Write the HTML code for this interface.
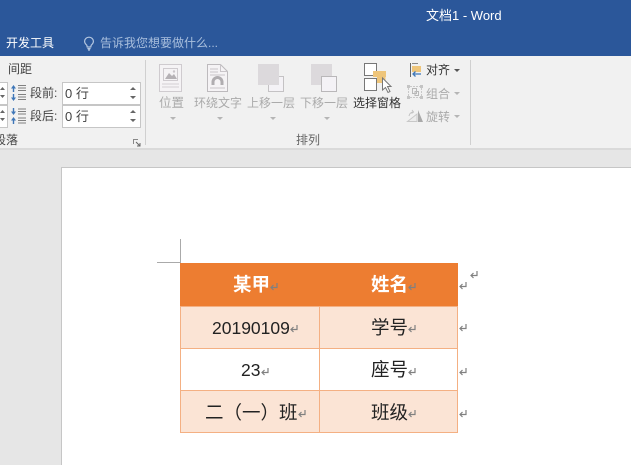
<!DOCTYPE html>
<html><head><meta charset="utf-8">
<style>
*{box-sizing:border-box;margin:0;padding:0}
html,body{width:631px;height:465px;overflow:hidden;background:#e6e6e6}
body{position:relative;font-family:"Liberation Sans","Noto Sans CJK SC",sans-serif}
.a{position:absolute;white-space:nowrap}
.t{font-size:12px;line-height:14px;color:#444}
.g{color:#aaa}
.c{font-size:18.5px;line-height:20px;color:#222}
svg{position:absolute;overflow:visible}
.tri{position:absolute;width:0;height:0;border-left:3px solid transparent;border-right:3px solid transparent;border-top:3px solid #b5b5b5}
.spin{position:absolute;background:#fff;border:1px solid #c6c6c6;font-size:13px;line-height:21px;color:#444;padding-left:2px}
</style></head><body>
<div class="a" style="left:0;top:0;width:631px;height:56px;background:#2b579a"></div>
<div class="a" style="left:426px;top:8px;font-size:13px;line-height:16px;color:#fff">文档1 - Word</div>
<div class="a" style="left:6px;top:36px;font-size:12px;line-height:15px;color:#fff">开发工具</div>
<svg style="left:83px;top:36px" width="12" height="15" viewBox="0 0 12 15" fill="none" stroke="#b5c7e0" stroke-width="1.2"><path d="M3.800 9.200C2.200 7.900 1.600 6.800 1.600 5.300 1.600 3 3.500 1.200 6 1.200s4.400 1.800 4.400 4.100c0 1.500-.6 2.600-2.200 3.900L7.800 11H4.200z"/><path d="M4.400 12.600h3.200M5 14h2"/></svg>
<div class="a" style="left:100px;top:36px;font-size:12px;line-height:15px;color:#a9bfdd">告诉我您想要做什么...</div>

<div class="a" style="left:0;top:56px;width:631px;height:94px;background:#f1f1f1;border-bottom:2px solid #dadada"></div>
<div class="a" style="left:145px;top:60px;width:1px;height:85px;background:#d0d0d0"></div>
<div class="a" style="left:470px;top:60px;width:1px;height:85px;background:#d0d0d0"></div>

<div class="a t" style="left:8px;top:62px">间距</div>
<div class="a" style="left:-6px;top:82px;width:14px;height:23px;background:#fff;border:1px solid #c6c6c6"></div>
<div class="a" style="left:-6px;top:105px;width:14px;height:23px;background:#fff;border:1px solid #c6c6c6"></div>
<svg style="left:0;top:86px" width="8" height="40" fill="#666"><path d="M0 4l2.500-3L5 4zM0 9l2.500 3L5 9zM0 27l2.500-3L5 27zM0 32l2.500 3L5 32z"/></svg>
<svg style="left:10px;top:84px" width="17" height="42" fill="none">
<path d="M3.500 1L1 4.500h5zM3.500 17L1 13.500h5zM3.500 31L1 27.500h5zM3.500 33L1 36.500h5z" fill="#3f77b8"/>
<path d="M3.500 4v4M3.500 10v4M3.500 24v4M3.500 36v4" stroke="#3f77b8" stroke-width="1.400"/>
<path d="M8 1.500h8M8 4h8M8 6.500h8M8 10.500h8M8 13h8M8 15.500h8M8 25h8M8 27.500h8M8 30h8M8 34h8M8 36.500h8M8 39h8" stroke="#808080"/></svg>
<div class="a t" style="left:30px;top:86px">段前:</div>
<div class="a t" style="left:30px;top:109px">段后:</div>
<div class="spin" style="left:62px;top:82px;width:79px;height:23px">0 行</div>
<div class="spin" style="left:62px;top:105px;width:79px;height:23px">0 行</div>
<svg style="left:129px;top:86px" width="8" height="40" fill="#666"><path d="M1 4l3-3 3 3zM1 10l3 3 3-3zM1 27l3-3 3 3zM1 33l3 3 3-3z"/></svg>
<div class="a t" style="left:-6px;top:133px">段落</div>
<svg style="left:133px;top:139px" width="8" height="8" fill="none" stroke="#888"><path d="M.5 5V.5H5"/><path d="M3 3l4 4M7 4v3H4" stroke="#666"/></svg>

<svg style="left:159px;top:64px" width="23" height="28" fill="none"><rect x=".5" y=".5" width="22" height="27" fill="#f5f3f5" stroke="#cfcbcf"/><rect x="4.500" y="4.500" width="14" height="12" stroke="#cfcbcf"/><path d="M6 15l4-6 3 3 2-2 3 5z" fill="#b5b1b5"/><circle cx="15" cy="7.500" r="1.200" fill="#c9c5c9"/><path d="M3 20h17M3 23h17" stroke="#d3cfd3"/></svg>
<div class="a t g" style="left:159px;top:96px;font-size:12.500px">位置</div>
<div class="tri" style="left:170px;top:117px"></div>
<svg style="left:207px;top:64px" width="21" height="28" fill="none"><path d="M.5.500h13l7 7v20H.5z" fill="#f5f3f5" stroke="#bdbabd"/><path d="M13.500.500v7h7M3 5h8M3 8h8M3 11h15M3 24h15" stroke="#c9c5c9"/><path d="M4.500 21v-3a6 6 0 0 1 12 0v3h-3v-3a3 3 0 0 0-6 0v3z" fill="#b0adb0"/></svg>
<div class="a t g" style="left:194px;top:96px">环绕文字</div>
<div class="tri" style="left:217px;top:117px"></div>
<svg style="left:258px;top:64px" width="27" height="28" fill="none"><rect x="10.500" y="12.500" width="15" height="15" fill="#f4f2f6" stroke="#c4c2c4"/><rect width="21" height="21" fill="#dcd9dc"/></svg>
<div class="a t g" style="left:247px;top:96px">上移一层</div>
<div class="tri" style="left:270px;top:117px"></div>
<svg style="left:311px;top:64px" width="27" height="28" fill="none"><rect width="21" height="21" fill="#dcd9dc"/><rect x="10.500" y="12.500" width="15" height="15" fill="#f4f2f6" stroke="#b9b7b9"/></svg>
<div class="a t g" style="left:300px;top:96px">下移一层</div>
<div class="tri" style="left:324px;top:117px"></div>
<svg style="left:364px;top:63px" width="30" height="33" fill="none"><rect x=".5" y=".5" width="12" height="12" fill="#fff" stroke="#777"/><rect x=".5" y="15.500" width="12" height="12" fill="#fff" stroke="#777"/><path d="M9 8h13v6h-.5v6H13v-6H9z" fill="#eec57a"/><path d="M18.500 15v12l3-2.500 2.500 5 2-1-2.500-5H27z" fill="#fff" stroke="#777"/></svg>
<div class="a t" style="left:353px;top:96px;color:#333">选择窗格</div>

<svg style="left:409px;top:62px" width="16" height="16" fill="none"><path d="M1.500 1v14" stroke="#666"/><path d="M3 1.500h6" stroke="#888"/><rect x="3" y="4" width="9" height="6" fill="#eec57a"/><path d="M12 12H4M6.500 9.500L4 12l2.500 2.500" stroke="#3f77b8" stroke-width="1.300"/></svg>
<div class="a t" style="left:426px;top:63px;color:#333">对齐</div>
<div class="tri" style="left:454px;top:69px;border-top-color:#555"></div>
<svg style="left:407px;top:85px" width="17" height="16" fill="none"><path d="M0 0h3v3H0zM13 0h3v3h-3zM0 11h3v3H0zM13 11h3v3h-3z" fill="#c4c4c4"/><path d="M1.500 3v8M14.500 3v8M3 1.500h10M3 12.500h10" stroke="#c9c9c9" stroke-dasharray="2 1"/><path d="M5.500 3.500h4v5h-4zM8 6.500h3.500v4H8z" stroke="#b9b9b9"/></svg>
<div class="a t g" style="left:426px;top:87px">组合</div>
<div class="tri" style="left:454px;top:92px"></div>
<svg style="left:407px;top:109px" width="17" height="15" fill="none"><path d="M.5 12.500L10 5v7.500z" fill="#ececec" stroke="#c8c8c8"/><path d="M11 1l5 12h-5z" fill="#a9a9a9"/><path d="M2 7a5 5 0 0 1 4-4M5 1l1.500 2L4.500 4.500" stroke="#c4c4c4"/></svg>
<div class="a t g" style="left:426px;top:110px">旋转</div>
<div class="tri" style="left:454px;top:115px"></div>
<div class="a t" style="left:296px;top:133px;color:#666">排列</div>

<div class="a" style="left:61px;top:167px;width:580px;height:310px;background:#fff;border:1px solid #c6c6c6"></div>
<div class="a" style="left:180px;top:239px;width:1px;height:24px;background:#aaa"></div>
<div class="a" style="left:157px;top:262px;width:23px;height:1px;background:#aaa"></div>

<div class="a" style="left:180px;top:263px;width:278px;height:170px;background:#fff;border:1px solid #f4b083"></div>
<div class="a" style="left:180px;top:263px;width:278px;height:43px;background:#ed7d31"></div>
<div class="a" style="left:180px;top:306px;width:278px;height:43px;background:#fbe4d5;border:1px solid #f4b083"></div>
<div class="a" style="left:180px;top:348px;width:278px;height:43px;border:1px solid #f4b083;background:#fff"></div>
<div class="a" style="left:180px;top:390px;width:278px;height:43px;background:#fbe4d5;border:1px solid #f4b083"></div>
<div class="a" style="left:319px;top:306px;width:1px;height:127px;background:#f4b083"></div>

<div class="a c" style="left:233px;top:275px;color:#fff;font-weight:bold">某甲</div>
<div class="a c" style="left:371px;top:275px;color:#fff;font-weight:bold">姓名</div>
<div class="a c" style="left:212px;top:318px;font-size:17.500px">20190109</div>
<div class="a c" style="left:371px;top:318px">学号</div>
<div class="a c" style="left:241px;top:360px;font-size:17.500px">23</div>
<div class="a c" style="left:371px;top:360px">座号</div>
<div class="a c" style="left:205px;top:403px">二（一）班</div>
<div class="a c" style="left:371px;top:403px">班级</div>

<svg style="left:0;top:0" width="631" height="465" fill="none" stroke="#808080" stroke-width="1.200">
<defs><path id="m" d="M7 0v4.500H1M3.500 2L1 4.500 3.500 7"/></defs>
<use href="#m" x="270" y="283"/><use href="#m" x="408" y="283"/><use href="#m" x="459" y="282"/><use href="#m" x="470" y="271"/>
<use href="#m" x="290" y="325"/><use href="#m" x="408" y="325"/><use href="#m" x="459" y="324"/>
<use href="#m" x="261" y="368"/><use href="#m" x="408" y="368"/><use href="#m" x="459" y="368"/>
<use href="#m" x="298" y="410"/><use href="#m" x="408" y="410"/><use href="#m" x="459" y="410"/>
</svg>
</body></html>
